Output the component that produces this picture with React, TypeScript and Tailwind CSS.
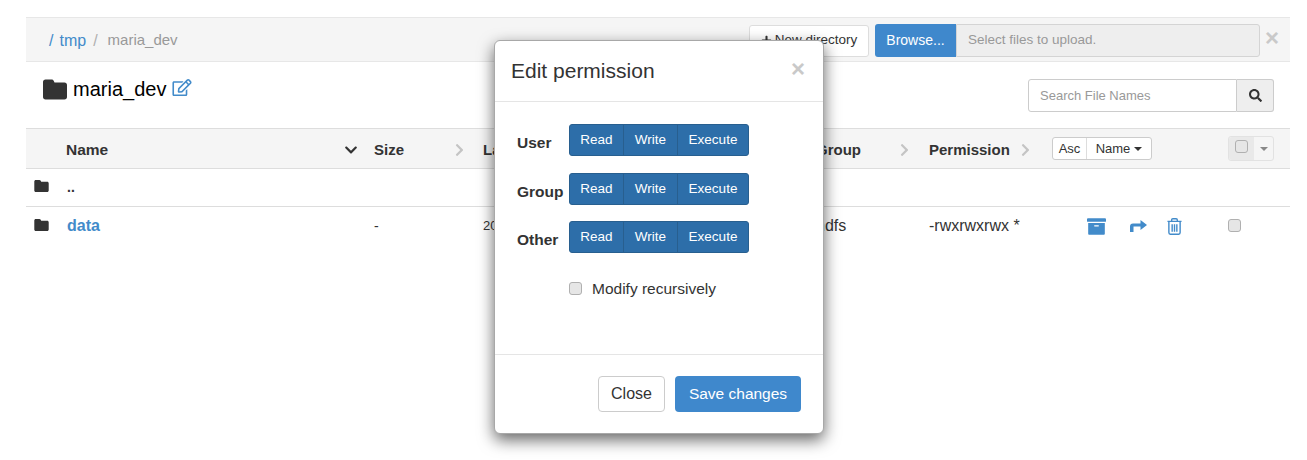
import {FaArchive, FaChevronDown, FaChevronRight, FaPlus, FaRegEdit, FaSearch} from 'react-icons/fa';

const FolderIcon = ({className}: {className: string}) => (
  <svg viewBox="0 0 24 20" className={className} fill="#333">
    <path d="M2.5 0h6c1 0 1.700.5 2.200 1.300L11.500 3H21.500C23 3 24 4 24 5.500v12C24 19 23 20 21.500 20h-19C1 20 0 19 0 17.500v-15C0 1 1 0 2.500 0z" />
  </svg>
);

const ShareIcon = ({className}: {className: string}) => (
  <svg viewBox="0 0 17 12" className={className} fill="currentColor">
    <path d="M0 12V6.500C0 4.500 1 3.500 3 3.500H10.500V0L17 5L10.500 10V6.500H3.500V12z" />
  </svg>
);

const TrashIcon = ({className}: {className: string}) => (
  <svg viewBox="0 0 16 18" className={className} fill="none" stroke="currentColor" strokeWidth="1.500">
    <path d="M0.500 3.500H15.500M5 3.500V2C5 1.200 5.500 0.700 6.300 0.700H9.700C10.500 0.700 11 1.200 11 2V3.500" />
    <path d="M2 3.500V15.500C2 16.500 2.600 17.300 3.500 17.300H12.500C13.400 17.300 14 16.500 14 15.500V3.500" />
    <path d="M5.500 6.500V14.500M8 6.500V14.500M10.500 6.500V14.500" />
  </svg>
);

const Check = ({className = ''}: {className?: string}) => (
  <span className={`block w-[13px] h-[13px] rounded-[3px] border border-[#b0b0b0] bg-[#e6e6e6] ${className}`} />
);

const HeaderCell = ({label, down, pr}: {label: string; down?: boolean; pr: string}) => (
  <div className={`flex items-center justify-between pt-[3px] font-bold text-[#333] ${down ? 'text-[15.500px]' : 'text-[15px]'} ${pr}`}>
    <span>{label}</span>
    {down ? <FaChevronDown className="w-[14px] h-[14px] text-[#333]" /> : <FaChevronRight className="w-[13px] h-[14px] text-[#c4c4c4]" />}
  </div>
);

const PermRow = ({label, className}: {label: string; className: string}) => (
  <div className={`flex items-center ${className}`}>
    <span className="w-[52px] pt-[5px] font-bold text-[15.500px] text-[#333]">{label}</span>
    <div className="flex h-[32px] rounded-[3px] border border-[#285f8f] bg-[#2d6ea9] text-[13.500px] text-white overflow-hidden">
      <span className="w-[54px] flex items-center justify-center pt-[1px] border-r border-[#285f8f]">Read</span>
      <span className="w-[54px] flex items-center justify-center pt-[1px] border-r border-[#285f8f]">Write</span>
      <span className="w-[70px] flex items-center justify-center pt-[1px]">Execute</span>
    </div>
  </div>
);

const rowGrid = 'grid grid-cols-[40px_308px_109px_333px_113px_123px_176px_62px] items-center';

export default function App() {
  return (
    <div className="relative w-[1307px] h-[460px] overflow-hidden bg-white pt-[17px] pl-[26px] font-['Liberation_Sans',Arial,sans-serif] text-[14px] text-[#333]">
      <div className="w-[1264px]">
        {/* Breadcrumb and upload bar */}
        <div className="flex items-center h-[45px] pt-[2px] bg-[#f5f5f5] border-y border-[#e7e7e7]">
          <div className="flex items-center pl-[23px] w-[723px]">
            <span className="text-[16px] text-[#428bca]">/</span>
            <span className="ml-[6px] text-[16px] text-[#428bca]">tmp</span>
            <span className="ml-[7px] text-[16px] text-[#b0b0b0]">/</span>
            <span className="ml-[10px] text-[15px] text-[#999]">maria_dev</span>
          </div>
          <button className="flex items-center h-[32px] w-[120px] justify-center gap-[3px] bg-white border border-[#ddd] rounded-[3px] text-[13.500px]">
            <FaPlus className="w-[11px] h-[11px]" />
            New directory
          </button>
          <div className="flex h-[33px] w-[385px] ml-[6px]">
            <span className="w-[81px] flex items-center justify-center bg-[#3f88cc] text-white rounded-l-[3px] text-[14px]">Browse...</span>
            <span className="flex-1 flex items-center pl-[11px] bg-[#eee] border border-[#d4d4d4] rounded-r-[3px] text-[13.500px] text-[#999]">Select files to upload.</span>
          </div>
          <span className="ml-[5px] mb-[6px] text-[24px] leading-none font-bold text-[#c9c9c9]">×</span>
        </div>

        {/* Title and search */}
        <div className="flex items-start justify-between h-[66px] pl-[17px] pr-[16px]">
          <div className="flex items-center pt-[12px]">
            <FolderIcon className="w-[24px] h-[21px]" />
            <span className="ml-[6px] text-[20px] text-black">maria_dev</span>
            <FaRegEdit className="ml-[6px] mb-[4px] w-[20px] h-[17px] text-[#428bca]" />
          </div>
          <div className="flex h-[33px] mt-[17px] w-[246px]">
            <span className="flex-1 flex items-center pl-[11px] border border-[#ccc] rounded-l-[3px] text-[13px] text-[#999]">Search File Names</span>
            <span className="w-[37px] flex items-center justify-center bg-[#eee] border border-l-0 border-[#ccc] rounded-r-[3px]">
              <FaSearch className="w-[13px] h-[13px] text-[#333]" />
            </span>
          </div>
        </div>

        {/* Table header */}
        <div className={`${rowGrid} h-[41px] bg-[#f5f5f5] border-y border-[#ddd]`}>
          <div />
          <HeaderCell label="Name" down pr="pr-[16px]" />
          <HeaderCell label="Size" pr="pr-[17px]" />
          <div className="pt-[3px] font-bold text-[15px]">La</div>
          <HeaderCell label="Group" pr="pr-[18px]" />
          <HeaderCell label="Permission" pr="pr-[20px]" />
          <div className="flex h-[23px] w-[100px] bg-white border border-[#ccc] rounded-[3px] text-[13px]">
            <span className="w-[34px] flex items-center justify-center border-r border-[#ddd]">Asc</span>
            <span className="flex-1 flex items-center justify-center gap-[4px]">
              Name
              <span className="border-x-[4px] border-x-transparent border-t-[4px] border-t-[#333] mt-[1px]" />
            </span>
          </div>
          <div className="flex h-[25px] w-[46px] rounded-[3px] border border-[#e2e2e2]">
            <span className="w-[25px] bg-[#e9e9e9] rounded-l-[3px] flex justify-center pt-[3px]">
              <Check />
            </span>
            <span className="flex-1 flex items-center justify-center">
              <span className="border-x-[4px] border-x-transparent border-t-[4px] border-t-[#888]" />
            </span>
          </div>
        </div>

        {/* Rows */}
        <div className={`${rowGrid} h-[38px] border-b border-[#ddd]`}>
          <div className="pl-[8px]"><FolderIcon className="w-[15px] h-[12px] mb-[3px]" /></div>
          <div className="font-bold pl-[1px]">..</div>
        </div>
        <div className={`${rowGrid} h-[38px]`}>
          <div className="pl-[8px]"><FolderIcon className="w-[15px] h-[12px] mb-[3px]" /></div>
          <div className="font-bold text-[16px] pl-[1px] text-[#428bca]">data</div>
          <div>-</div>
          <div className="text-[13px]">20</div>
          <div className="text-[16px]">hdfs</div>
          <div className="text-[16px]">-rwxrwxrwx *</div>
          <div className="flex items-center text-[#428bca]">
            <FaArchive className="ml-[35px] w-[19px] h-[19px]" />
            <ShareIcon className="ml-[24px] w-[17px] h-[12px]" />
            <TrashIcon className="ml-[20px] w-[15px] h-[17px]" />
          </div>
          <Check className="mb-[2px]" />
        </div>
      </div>

      {/* Edit permission dialog */}
      <div className="absolute left-[494px] top-[40px] w-[330px] h-[394px] flex flex-col bg-white border border-[#a8a8a8] rounded-[6px] shadow-[0_6px_16px_rgba(0,0,0,0.6)]">
        <div className="flex justify-between h-[61px] shrink-0 pl-[16px] pr-[18px] border-b border-[#e5e5e5]">
          <span className="pt-[14px] text-[21px] text-[#333]">Edit permission</span>
          <span className="pt-[14px] text-[24px] leading-[28px] font-bold text-[#c9c9c9]">×</span>
        </div>
        <div className="flex-1 pl-[22px] pt-[22px]">
          <PermRow label="User" className="" />
          <PermRow label="Group" className="mt-[17px]" />
          <PermRow label="Other" className="mt-[16px]" />
          <div className="flex items-center mt-[24px] ml-[52px]">
            <Check className="w-[12px] h-[12px] bg-[#dcdcdc]" />
            <span className="ml-[10px] text-[15.500px]">Modify recursively</span>
          </div>
        </div>
        <div className="flex justify-end gap-[10px] h-[79px] shrink-0 pt-[21px] pr-[22px] border-t border-[#e5e5e5]">
          <button className="w-[67px] h-[36px] bg-white border border-[#ccc] rounded-[4px] text-[16px] text-[#333]">Close</button>
          <button className="w-[126px] h-[36px] bg-[#3f88cc] rounded-[4px] text-[15.500px] text-white">Save changes</button>
        </div>
      </div>
    </div>
  );
}
